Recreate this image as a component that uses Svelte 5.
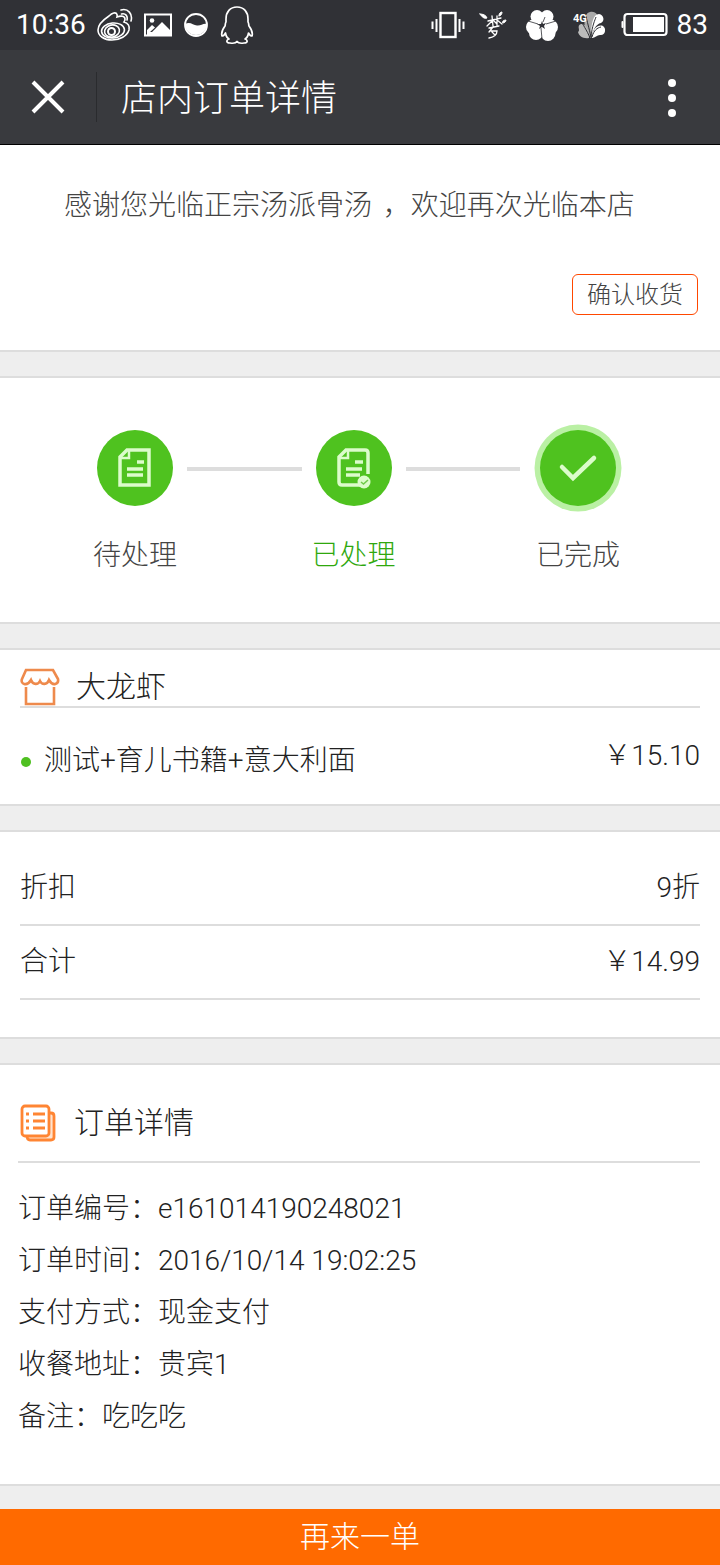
<script lang="ts">
    const shopName = '正宗汤派骨汤';

    const steps = [
        { label: '待处理', icon: 'doc', active: false },
        { label: '已处理', icon: 'doc-check', active: true },
        { label: '已完成', icon: 'done', active: false },
    ];

    const items = [{ name: '测试+育儿书籍+意大利面', price: '￥15.10' }];

    const totals = [
        { label: '折扣', value: '9折' },
        { label: '合计', value: '￥14.99' },
    ];

    const details = [
        { label: '订单编号', value: 'e161014190248021' },
        { label: '订单时间', value: '2016/10/14 19:02:25' },
        { label: '支付方式', value: '现金支付' },
        { label: '收餐地址', value: '贵宾1' },
        { label: '备注', value: '吃吃吃' },
    ];
</script>

<div class="page">
    <div class="status-bar">
        <span class="time">10:36</span>
        <div class="status-icons left">
            <!-- weibo -->
            <svg width="36" height="34" viewBox="0 0 36 34" fill="none" stroke="#fff" stroke-width="1.6">
                <path d="M12 8C15 5 19 3.500 20 6.500C20.300 8 20 9 20 9C24 7.500 28 8 28 11C28 12.500 27 14 27 14C31 15 33 18 32 22C30 28 23 32 15 32C7 32 1 28 1 22C1 17 6 12 12 8Z" />
                <ellipse cx="16" cy="22.500" rx="11.500" ry="7.500" transform="rotate(-6 16 22.500)" />
                <ellipse cx="15" cy="23" rx="7.500" ry="6" transform="rotate(-12 15 23)" />
                <circle cx="14.500" cy="23.500" r="3.500" stroke-width="2" />
                <path d="M24 2C31 0 36 6 34 13M24.500 6C28.500 5 31 8 30 12" stroke-linecap="round" />
            </svg>
            <!-- picture -->
            <svg width="28" height="24" viewBox="0 0 28 24">
                <rect x="1" y="1.500" width="26" height="21" fill="none" stroke="#fff" stroke-width="2" />
                <circle cx="8" cy="7.500" r="2.300" fill="#fff" />
                <path d="M3 20L3 17L8 12L11 14.500L6 19L8 19L18 9L26 17V22H3Z" fill="#fff" />
            </svg>
            <!-- half disc -->
            <svg width="26" height="26" viewBox="0 0 26 26">
                <circle cx="13" cy="13" r="11" fill="none" stroke="#fff" stroke-width="1.800" />
                <path d="M2 12C7 9 10 13 14 13.500C18 14 20 11 24 12A11 11 0 1 1 2 12Z" fill="#fff" />
            </svg>
            <!-- penguin -->
            <svg width="34" height="40" viewBox="0 0 34 40" fill="none" stroke="#fff" stroke-width="1.700" stroke-linejoin="round">
                <path d="M17 2C10 2 6 7 6 14L6 17C5 18 5.500 20 5 21C2 25 1 28 2 31C3 31 4.500 30 5.500 28C6 31 7 33 9 34C6 35 6 38 10 38C13 38.500 16 38 17 36.500C18 38 21 38.500 24 38C28 38 28 35 25 34C27 33 28 31 28.500 28C29.500 30 31 31 32 31C33 28 32 25 29 21C28.500 20 29 18 28 17L28 14C28 7 24 2 17 2Z" />
            </svg>
        </div>
        <div class="status-icons right">
            <!-- vibrate -->
            <svg width="34" height="28" viewBox="0 0 34 28" fill="none" stroke="#fff">
                <rect x="9.500" y="2" width="15" height="24" stroke-width="2.400" />
                <path d="M1.500 10.500V18M5.500 8V21M28.500 8V21M32.500 10.500V18" stroke-width="2" />
            </svg>
            <!-- dream -->
            <svg width="32" height="28" viewBox="0 0 32 28" fill="none" stroke="#fff" stroke-width="1.300" stroke-linecap="round">
                <path d="M1 3C4 3 7 4 8 7C5 8 3 6 1 3ZM20 4C20 2 22 1 23 1C23 3 22 5 20 5ZM24 10C25 9 27 9 27 9C27 11 25 12 24 12Z" fill="#fff" stroke-width="1" />
                <path d="M9 10L22 7M13 5L14 15M18 5V15M8 15L13 10M14 9L18 13M18 9L23 13M10 17L20 15M14 16L10 21M12 20H18C18 23 15 26 10 27M13 21L16 24" />
            </svg>
            <!-- flower -->
            <svg width="34" height="34" viewBox="0 0 34 34" fill="#fff">
                <circle cx="12" cy="8.500" r="6.500" />
                <circle cx="22" cy="8.500" r="6.500" />
                <circle cx="25.500" cy="19" r="7.500" />
                <circle cx="8.500" cy="19" r="7.500" />
                <circle cx="11" cy="25" r="7" />
                <circle cx="23" cy="25.500" r="7.500" />
                <circle cx="17" cy="16" r="9" />
                <path d="M17 13L18 16L21 15L19 18L20 21L17 19L14 21L15 18L12 16H16Z" fill="#303136" />
                <path d="M18 14L20 9M21 16L31 13M13 16L3 13M16 20L17 31" fill="none" stroke="#303136" stroke-width="0.800" />
            </svg>
            <!-- mobile network -->
            <svg width="34" height="30" viewBox="0 0 34 30">
                <path d="M18 28C9 21 10 3 17 2C23 1 26 5 24 10Z" fill="#aaa" />
                <path d="M16 28C10 29 6 26 5 22C8 20 3 16 8 14C12 13 17 21 16 28Z" fill="#bbb" />
                <path d="M18 27C18 14 20 4 26 4C31 5 32 11 28 13C23 14 20 20 18 27Z" fill="#fff" />
                <path d="M19 28C19 20 24 14 30 16C34 19 32 26 27 25C24 25 22 28 19 28Z" fill="#fff" />
                <path d="M17 28C14 20 9 14 8 10M18 27C16 18 14 11 13 6M18 27C19 16 22 10 23 7M19 27C21 20 24 18 28 17" fill="none" stroke="#303136" stroke-width="1" />
                <text x="0" y="12" class="net">4G</text>
            </svg>
            <!-- battery -->
            <svg width="48" height="26" viewBox="0 0 48 26">
                <rect x="3.500" y="2" width="42" height="21" rx="3" fill="none" stroke="#fff" stroke-width="2.200" />
                <rect x="0.500" y="9" width="2" height="7" rx="1" fill="#fff" />
                <rect x="12" y="5" width="31" height="15" fill="#fff" />
            </svg>
        </div>
        <span class="battery">83</span>
    </div>

    <header class="nav">
        <button class="close" aria-label="关闭">
            <svg width="34" height="34" viewBox="0 0 34 34" stroke="#fff" stroke-width="4">
                <path d="M2 2L32 32M32 2L2 32" />
            </svg>
        </button>
        <h1>店内订单详情</h1>
        <button class="more" aria-label="更多">
            <svg width="8" height="40" viewBox="0 0 8 40" fill="#fff">
                <circle cx="4" cy="5" r="4" />
                <circle cx="4" cy="20" r="4" />
                <circle cx="4" cy="35" r="4" />
            </svg>
        </button>
    </header>

    <main>
        <section class="welcome">
            <p>感谢您光临<span class="shop">{shopName}</span> ，欢迎再次光临本店</p>
            <button class="confirm">确认收货</button>
        </section>

        <section class="progress">
            <ol>
                {#each steps as step, i}
                    {#if i > 0}
                        <li class="line" class:before-halo={step.icon === 'done'} aria-hidden="true"></li>
                    {/if}
                    <li class="step" class:active={step.active}>
                        <svg width="88" height="88" viewBox="0 0 88 88" fill="none" stroke="#dcfccb" stroke-width="3.500">
                            {#if step.icon === 'done'}
                                <circle cx="44" cy="44" r="43.500" fill="#baf0a4" stroke="none" />
                            {/if}
                            <circle cx="44" cy="44" r="38" fill="#4fc21f" stroke="none" />
                            {#if step.icon === 'doc'}
                                <path d="M36 26H58V61H29V33Z" />
                                <path d="M38 26V34H29" stroke-width="2.500" />
                                <path d="M46 38H53M36 45H52M36 51H52" />
                            {:else if step.icon === 'doc-check'}
                                <path d="M58 50V29Q58 26 55 26H36L29 33V58Q29 61 32 61H50" />
                                <path d="M38 26V34H29" stroke-width="2.500" />
                                <path d="M45 38H53M36 45H52M36 51H50" />
                                <circle cx="54" cy="58" r="6.500" fill="#dcfccb" stroke="none" />
                                <path d="M51 58L53.500 60L58 56" stroke="#6fcb49" stroke-width="1.500" />
                            {:else}
                                <path d="M28 43L39 54L60 34" stroke-width="4.500" stroke-linecap="round" />
                            {/if}
                        </svg>
                        <span>{step.label}</span>
                    </li>
                {/each}
            </ol>
        </section>

        <section class="goods">
            <h2>
                <svg width="40" height="38" viewBox="0 0 40 38" fill="none" stroke="#ee8a4c" stroke-width="2.600">
                    <path d="M6 2H33L38 11C39 16 33 19 29 12C27 17 22 17 20 13C18 17 13 17 11 12C7 19 0 16 2 11Z" />
                    <path d="M6 19V36H34V19" />
                </svg>
                大龙虾
            </h2>
            <ul>
                {#each items as item}
                    <li>
                        <span class="dot"></span>
                        <span class="name">{item.name}</span>
                        <span class="price">{item.price}</span>
                    </li>
                {/each}
            </ul>
        </section>

        <section class="totals">
            <dl>
                {#each totals as row}
                    <div>
                        <dt>{row.label}</dt>
                        <dd>{row.value}</dd>
                    </div>
                {/each}
            </dl>
        </section>

        <section class="details">
            <h2>
                <svg width="38" height="38" viewBox="0 0 38 38" fill="none" stroke="#ff8533" stroke-width="2.800">
                    <path d="M31 9H33Q36 9 36 12V33Q36 36 33 36H12Q9 36 9 32" fill="#ffe3cf" />
                    <rect x="4" y="2" width="27" height="30" rx="3" fill="#fff" />
                    <path d="M8 10H11M15 10H27M8 17H11M15 17H27M8 24H11M15 24H27" />
                </svg>
                订单详情
            </h2>
            <dl>
                {#each details as row}
                    <div>
                        <dt>{row.label}：</dt>
                        <dd>{row.value}</dd>
                    </div>
                {/each}
            </dl>
        </section>
    </main>

    <button class="reorder">再来一单</button>
</div>

<style>
    :global(body) {
        margin: 0;
        background: #eee;
    }

    .page {
        font-family: Roboto, "Noto Sans CJK SC", sans-serif;
        font-weight: 300;
        font-size: 28px;
        line-height: 40px;
        color: #222;
    }

    h1, h2, p, ol, ul, dl, dd {
        margin: 0;
        padding: 0;
        font-weight: 300;
        list-style: none;
    }

    button {
        font: inherit;
        padding: 0;
        border: none;
        background: none;
        cursor: pointer;
    }

    svg {
        display: block;
        flex: none;
    }

    .status-bar {
        display: flex;
        align-items: center;
        height: 50px;
        padding: 0 12px 0 16px;
        background: #303136;
        color: #fff;
        font-weight: 400;
    }

    .status-icons {
        display: flex;
        align-items: center;
    }

    .status-icons.left {
        gap: 11px;
        margin-left: 11px;
    }

    .status-icons.right {
        gap: 14px;
        margin-left: auto;
        margin-right: 8px;
    }

    .net {
        font: 700 11px Roboto, sans-serif;
        fill: #fff;
    }

    .nav {
        display: flex;
        align-items: center;
        height: 94px;
        background: #393a3e;
        border-bottom: 1px solid #000;
        color: #fff;
    }

    .close {
        display: flex;
        align-items: center;
        justify-content: center;
        width: 97px;
        height: 50px;
        border-right: 1px solid #2a2b2e;
    }

    .nav h1 {
        flex: 1;
        margin-left: 24px;
        padding-top: 4px;
        font-size: 36px;
        line-height: 52px;
    }

    .more {
        padding: 2px 44px 0;
    }

    main {
        display: flex;
        flex-direction: column;
        gap: 24px;
        padding-bottom: 23px;
    }

    section {
        background: #fff;
        border-top: 2px solid #ddd;
        border-bottom: 2px solid #ddd;
    }

    .welcome {
        display: flex;
        flex-direction: column;
        padding: 41px 22px 35px;
        border-top: none;
        color: #444;
    }

    .welcome p {
        padding: 0 36px 0 42px;
    }

    .shop {
        margin-right: 4px;
    }

    .confirm {
        align-self: flex-end;
        margin-top: 48px;
        padding: 2px 14px 0;
        font-size: 24px;
        line-height: 37px;
        border: 1px solid #ff4800;
        border-radius: 6px;
        color: #444;
    }

    .progress {
        padding: 46px 98px 46px 91px;
    }

    .progress ol {
        display: flex;
    }

    .step {
        display: flex;
        flex-direction: column;
        align-items: center;
        gap: 24px;
        width: 88px;
        color: #444;
    }

    .step.active {
        color: #2fa80d;
    }

    .line {
        flex: 1;
        height: 4px;
        margin: 43px 8px 0;
        background: #ddd;
    }

    .line.before-halo {
        margin-right: 14px;
    }

    .goods {
        padding: 0 20px;
    }

    h2 {
        display: flex;
        align-items: center;
        font-size: 30px;
        border-bottom: 2px solid #ddd;
    }

    .goods h2 {
        gap: 16px;
        padding-top: 18px;
        line-height: 38px;
    }

    .goods li {
        display: flex;
        align-items: center;
        height: 96px;
    }

    .dot {
        width: 10px;
        height: 10px;
        margin: 12px 13px 0 1px;
        border-radius: 50%;
        background: #4fc021;
    }

    .name {
        flex: 1;
        padding-top: 10px;
    }

    .totals {
        padding: 20px 20px 37px;
    }

    .totals div {
        display: flex;
        justify-content: space-between;
        padding: 16px 0;
        border-bottom: 2px solid #ddd;
    }

    .details {
        padding: 0 20px 41px 18px;
    }

    .details h2 {
        gap: 18px;
        padding: 38px 0 18px;
    }

    .details dl {
        padding-top: 20px;
    }

    .details div {
        display: flex;
        line-height: 52px;
    }

    .reorder {
        display: block;
        width: 100%;
        height: 56px;
        font-size: 30px;
        background: #ff6a00;
        color: #fff;
    }
</style>
